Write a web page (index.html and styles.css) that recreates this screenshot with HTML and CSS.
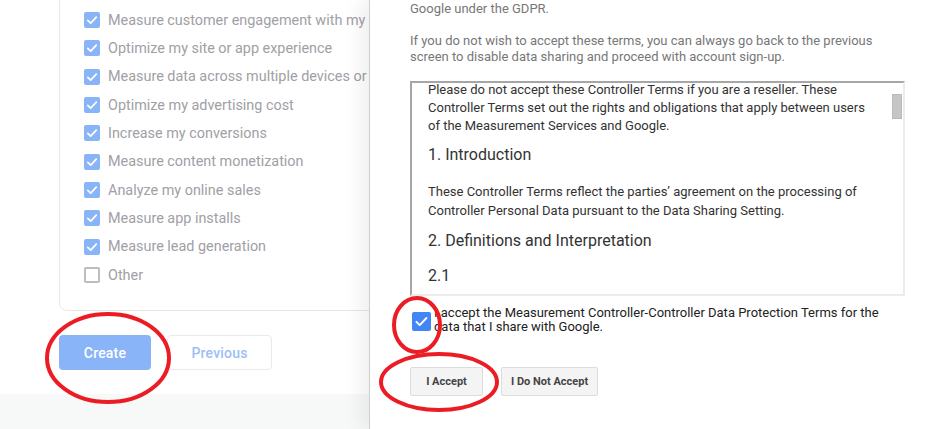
FILE: index.html
```html
<!DOCTYPE html>
<html lang="en">
<head>
<meta charset="utf-8">
<title>Data Protection Terms</title>
<link rel="stylesheet" href="styles.css">
</head>
<body>
<div class="page">
  <section class="left">
    <div class="left-top">
      <div class="card">
        <ul class="options">
          <li class="option"><span class="cb on"><svg viewBox="0 0 16 16"><path d="M3.8 8.3l2.9 2.9 5.6-6"/></svg></span>Measure customer engagement with my site or app</li>
          <li class="option"><span class="cb on"><svg viewBox="0 0 16 16"><path d="M3.8 8.3l2.9 2.9 5.6-6"/></svg></span>Optimize my site or app experience</li>
          <li class="option"><span class="cb on"><svg viewBox="0 0 16 16"><path d="M3.8 8.3l2.9 2.9 5.6-6"/></svg></span>Measure data across multiple devices or platforms</li>
          <li class="option"><span class="cb on"><svg viewBox="0 0 16 16"><path d="M3.8 8.3l2.9 2.9 5.6-6"/></svg></span>Optimize my advertising cost</li>
          <li class="option"><span class="cb on"><svg viewBox="0 0 16 16"><path d="M3.8 8.3l2.9 2.9 5.6-6"/></svg></span>Increase my conversions</li>
          <li class="option"><span class="cb on"><svg viewBox="0 0 16 16"><path d="M3.8 8.3l2.9 2.9 5.6-6"/></svg></span>Measure content monetization</li>
          <li class="option"><span class="cb on"><svg viewBox="0 0 16 16"><path d="M3.8 8.3l2.9 2.9 5.6-6"/></svg></span>Analyze my online sales</li>
          <li class="option"><span class="cb on"><svg viewBox="0 0 16 16"><path d="M3.8 8.3l2.9 2.9 5.6-6"/></svg></span>Measure app installs</li>
          <li class="option"><span class="cb on"><svg viewBox="0 0 16 16"><path d="M3.8 8.3l2.9 2.9 5.6-6"/></svg></span>Measure lead generation</li>
          <li class="option"><span class="cb off"></span>Other</li>
        </ul>
      </div>
      <div class="actions">
        <button class="btn-create">Create</button>
        <button class="btn-prev">Previous</button>
      </div>
    </div>
    <div class="left-bottom"></div>
  </section>

  <aside class="drawer">
    <p class="intro first">Google under the GDPR.</p>
    <p class="intro">If you do not wish to accept these terms, you can always go back to the previous screen to disable data sharing and proceed with account sign-up.</p>

    <div class="terms">
      <div class="terms-content">
        <p class="t-first">Please do not accept these Controller Terms if you are a reseller. These Controller Terms set out the rights and obligations that apply between users of the Measurement Services and Google.</p>
        <h3 class="t-h1">1. Introduction</h3>
        <p class="t-p2">These Controller Terms reflect the parties’ agreement on the processing of Controller Personal Data pursuant to the Data Sharing Setting.</p>
        <h3 class="t-h2">2. Definitions and Interpretation</h3>
        <h3 class="t-h3">2.1</h3>
      </div>
      <div class="scrollbar"><div class="thumb"></div></div>
    </div>

    <label class="accept">
      <span class="cb-big"><svg viewBox="0 0 18 18"><path d="M4.2 9.3l3.1 3.1 6.4-6.7"/></svg></span>
      <span class="accept-text">I accept the Measurement Controller-Controller Data Protection Terms for the data that I share with Google.</span>
    </label>

    <div class="accept-actions">
      <button class="gbtn accept-btn">I Accept</button>
      <button class="gbtn">I Do Not Accept</button>
    </div>
  </aside>

  <svg class="marks" viewBox="0 0 951 429" width="951" height="429">
    <ellipse cx="108" cy="358" rx="61" ry="44"/>
    <ellipse cx="417" cy="325" rx="23" ry="27"/>
    <ellipse cx="439" cy="382" rx="58" ry="28"/>
  </svg>
</div>
</body>
</html>
```

FILE: styles.css
```css
* { box-sizing: border-box; }

html, body {
  margin: 0;
  padding: 0;
  width: 951px;
  height: 429px;
  overflow: hidden;
  background: #ffffff;
  font-family: Roboto, "Liberation Sans", Arial, sans-serif;
}

.page {
  position: relative;
  display: flex;
  width: 951px;
  height: 429px;
}

/* ---------- left (dimmed) page ---------- */
.left {
  width: 369px;
  flex: none;
  display: flex;
  flex-direction: column;
  overflow: hidden;
}

.left-top {
  height: 394px;
  background: #ffffff;
  flex: none;
}

.left-bottom {
  flex: 1;
  background: #f7f9f9;
}

.card {
  margin-left: 59px;
  margin-top: -20px;
  width: 560px;
  border: 1px solid #e6e8ea;
  border-radius: 8px;
  padding: 25px 0 21px 24px;
}

.options {
  list-style: none;
  margin: 0;
  padding: 0;
}

.option {
  display: flex;
  align-items: center;
  height: 28.33px;
  font-size: 14.4px;
  color: #a0a0a6;
  white-space: nowrap;
}

.cb {
  width: 16px;
  height: 16px;
  border-radius: 2px;
  margin-right: 8px;
  flex: none;
  display: flex;
}

.cb.on { background: #8ab4f8; }
.cb.on svg { width: 16px; height: 16px; }
.cb.on path {
  fill: none;
  stroke: #ffffff;
  stroke-width: 1.7;
  stroke-linecap: round;
  stroke-linejoin: round;
}

.cb.off {
  border: 2px solid #bdbdbd;
  background: #ffffff;
}

.actions {
  display: flex;
  gap: 16px;
  margin: 24px 0 0 59px;
}

.btn-create, .btn-prev {
  font-family: Roboto, "Liberation Sans", Arial, sans-serif;
  font-size: 14px;
  font-weight: 500;
  height: 35px;
  border-radius: 4px;
  letter-spacing: 0.2px;
}

.btn-create {
  width: 92px;
  background: #8ab4f8;
  color: #ffffff;
  border: none;
}

.btn-prev {
  width: 105px;
  background: #ffffff;
  color: #9dbef5;
  border: 1px solid #e8eaed;
}

/* ---------- right drawer ---------- */
.drawer {
  flex: 1;
  background: #ffffff;
  border-left: 1px solid #cfcfcf;
  box-shadow: -10px 0 16px rgba(0, 0, 0, 0.06);
  padding: 0 46px 0 40px;
  position: relative;
  z-index: 1;
}

.intro {
  margin: 16px 0 0;
  font-size: 13px;
  line-height: 16px;
  color: #777777;
}

.intro.first { margin-top: 1px; }

.terms {
  margin-top: 16px;
  height: 215px;
  display: flex;
  border-style: solid;
  border-width: 2px;
  border-color: #a6a6a6 #ececec #ececec #a6a6a6;
  overflow: hidden;
}

.terms-content {
  flex: 1;
  padding: 0 18px 0 16px;
  color: #333333;
  overflow: hidden;
}

.terms-content p {
  margin: 0;
  font-size: 13px;
  line-height: 18px;
}

.terms-content h3 {
  margin: 0;
  font-size: 16px;
  font-weight: 400;
  line-height: 22px;
  color: #333333;
}

.t-first { margin-top: -2px !important; }
.t-h1 { margin-top: 9px !important; }
.t-p2 { margin-top: 17px !important; line-height: 18.5px !important; }
.t-h2 { margin-top: 10px !important; }
.t-h3 { margin-top: 13px !important; }

.scrollbar {
  width: 12px;
  flex: none;
  background: #ffffff;
  padding: 11px 1px 0 1px;
}

.thumb {
  height: 25px;
  background: #c6c6c6;
  border: 1px solid #bababa;
}

.accept {
  display: flex;
  align-items: flex-start;
  margin-top: 10px;
}

.cb-big {
  width: 19px;
  height: 19px;
  border-radius: 2px;
  background: #4285f4;
  margin: 6px 3px 0 2px;
  flex: none;
  display: flex;
}

.cb-big svg { width: 19px; height: 19px; }
.cb-big path {
  fill: none;
  stroke: #ffffff;
  stroke-width: 1.8;
  stroke-linecap: round;
  stroke-linejoin: round;
}

.accept-text {
  font-size: 13px;
  line-height: 14px;
  color: #222222;
}

.accept-actions {
  display: flex;
  gap: 18px;
  margin-top: 33px;
}

.gbtn {
  font-family: Roboto, "Liberation Sans", Arial, sans-serif;
  font-size: 11px;
  font-weight: 700;
  height: 29px;
  min-width: 73px;
  padding: 0 9px;
  color: #444444;
  background: #f4f4f4;
  border: 1px solid #dcdcdc;
  border-radius: 2px;
}

/* ---------- annotation overlay ---------- */
.marks {
  position: absolute;
  left: 0;
  top: 0;
  z-index: 5;
  pointer-events: none;
}

.marks ellipse {
  fill: none;
  stroke: #ec1c24;
  stroke-width: 4;
}
```
